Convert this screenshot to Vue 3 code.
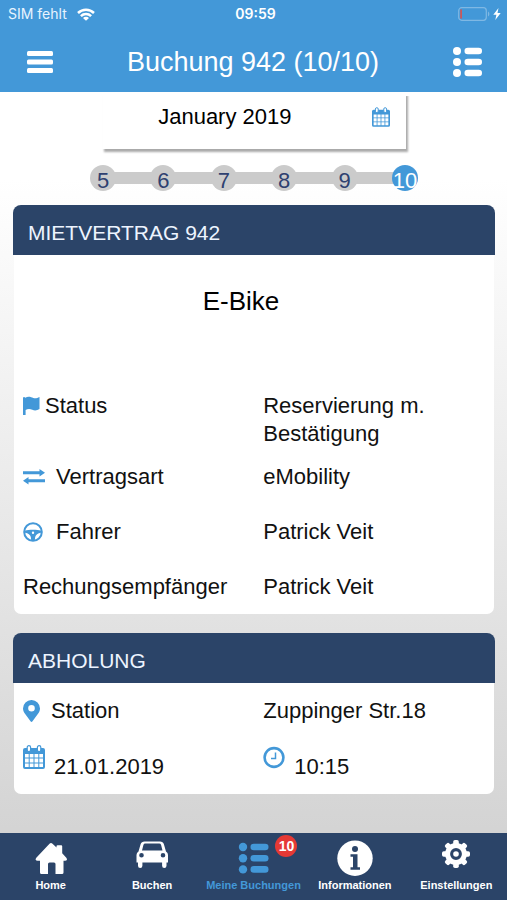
<script setup>
const days = [5, 6, 7, 8, 9, 10]
const activeDay = 10

const tabs = [
  { id: 'home', label: 'Home' },
  { id: 'car', label: 'Buchen' },
  { id: 'list', label: 'Meine Buchungen', badge: 10, active: true },
  { id: 'info', label: 'Informationen' },
  { id: 'gear', label: 'Einstellungen' },
]

const teeth = [0, 45, 90, 135, 180, 225, 270, 315]
</script>

<template>
  <div class="screen">
    <header class="top">
      <div class="status">
        <div class="carrier">
          <span>SIM fehlt</span>
          <svg class="wifi" viewBox="0 0 18 13" aria-hidden="true">
            <g fill="none" stroke="currentColor" stroke-width="2.500">
              <path d="M1 5C5.500 .7 12.500 .7 17 5" />
              <path d="M3.900 8.100C6.700 5.300 11.300 5.300 14.100 8.100" />
            </g>
            <path d="M9 12.800 6 9.900C7.700 8.400 10.300 8.400 12 9.900Z" fill="currentColor" />
          </svg>
        </div>
        <time class="clock">09:59</time>
        <div class="power">
          <svg class="battery" viewBox="0 0 32 14" aria-hidden="true">
            <rect x=".7" y=".7" width="27.600" height="12.600" rx="3" fill="none" stroke="#7fb8e4" stroke-width="1.200" />
            <path d="M30 4.500c1.800.8 1.800 4.200 0 5z" fill="#7fb8e4" />
            <rect x="2.200" y="2.300" width="1.800" height="9.400" rx=".8" fill="#c9585c" />
          </svg>
          <svg class="bolt" viewBox="0 0 8 12" aria-hidden="true">
            <path d="M5.500 0 .3 6.800h3.100L2.300 12 7.700 4.900H4.500z" fill="#fff" />
          </svg>
        </div>
      </div>
      <div class="navbar">
        <button class="icon-btn" type="button" aria-label="Menü">
          <svg class="burger" viewBox="0 0 26 22" aria-hidden="true">
            <rect width="26" height="5" rx="1.500" y="0" fill="#fff" />
            <rect width="26" height="5" rx="1.500" y="8.500" fill="#fff" />
            <rect width="26" height="5" rx="1.500" y="17" fill="#fff" />
          </svg>
        </button>
        <h1>Buchung 942 (10/10)</h1>
        <button class="icon-btn" type="button" aria-label="Liste">
          <svg class="list" viewBox="0 0 29 30" aria-hidden="true">
            <g fill="#fff">
              <circle cx="4" cy="4" r="4" /><circle cx="4" cy="15" r="4" /><circle cx="4" cy="26" r="4" />
              <rect x="11.500" y=".7" width="17.500" height="6.600" rx="3.300" />
              <rect x="11.500" y="11.700" width="17.500" height="6.600" rx="3.300" />
              <rect x="11.500" y="22.700" width="17.500" height="6.600" rx="3.300" />
            </g>
          </svg>
        </button>
      </div>
    </header>

    <main class="content">
      <button class="month" type="button">
        <span>January 2019</span>
        <svg class="month-icon" viewBox="0 0 22 24" aria-hidden="true">
          <path fill="currentColor" fill-rule="evenodd" d="M0 5q0-2 2-2h18q2 0 2 2v17q0 2-2 2H2q-2 0-2-2zM2 9v3.500h3.700V9zm4.700 0v3.500h3.800V9zm4.800 0v3.500h3.800V9zm4.800 0v3.500H20V9zM2 13.500v4h3.700v-4zm4.700 0v4h3.800v-4zm4.800 0v4h3.800v-4zm4.800 0v4H20v-4zM2 18.500V22h3.700v-3.500zm4.700 0V22h3.800v-3.500zm4.800 0V22h3.800v-3.500zm4.800 0V22H20v-3.500z" />
          <g fill="#fff" stroke="currentColor" stroke-width="1.200">
            <rect x="4.200" y=".6" width="3.400" height="6" rx="1.700" />
            <rect x="14.400" y=".6" width="3.400" height="6" rx="1.700" />
          </g>
        </svg>
      </button>

      <ol class="days">
        <li v-for="day in days" :key="day">
          <button type="button" class="day" :class="{ active: day === activeDay }">{{ day }}</button>
        </li>
      </ol>

      <section class="card">
        <h2>MIETVERTRAG 942</h2>
        <div class="body">
          <p class="vehicle">E-Bike</p>
          <dl>
            <div class="row">
              <dt class="tight">
                <svg class="narrow" viewBox="0 0 17 20" aria-hidden="true">
                  <path fill="currentColor" d="M0 1.500Q1.200.6 2.300 1.700C5-.2 8 .8 10.300 1.900 12.400 2.800 14.200 2 16.500.9V13c-2.200 1.500-4.700 2-7.200.8C6.800 12.600 4.600 12.800 2.600 14V19H0z" />
                </svg>
                Status
              </dt>
              <dd>Reservierung m. Bestätigung</dd>
            </div>
            <div class="row">
              <dt>
                <svg class="wide" viewBox="0 0 22 20" aria-hidden="true">
                  <path fill="currentColor" d="M0 4.300h16.500V2L22 5.800l-5.500 3.800V7.300H0zM22 12.300H5.500V10L0 13.800l5.500 3.800v-2.300H22z" />
                </svg>
                Vertragsart
              </dt>
              <dd>eMobility</dd>
            </div>
            <div class="row">
              <dt>
                <svg class="wide" viewBox="0 0 22 20" aria-hidden="true">
                  <circle cx="10" cy="10" r="8.800" fill="none" stroke="currentColor" stroke-width="2" />
                  <path fill="currentColor" fill-rule="evenodd" d="M2 8.800C5.500 7.400 14.500 7.400 18 8.800v1.900c-3.200.3-5.300 2.300-5.800 4.400L11.800 18H8.200l-.4-2.900C7.300 13 5.200 11 2 10.700zM10 9.600a1.200 1.200 0 1 0 0 2.400 1.200 1.200 0 0 0 0-2.400z" />
                </svg>
                Fahrer
              </dt>
              <dd>Patrick Veit</dd>
            </div>
            <div class="row">
              <dt>Rechungsempfänger</dt>
              <dd>Patrick Veit</dd>
            </div>
          </dl>
        </div>
      </section>

      <section class="card">
        <h2>ABHOLUNG</h2>
        <div class="body">
          <dl class="pickup">
            <div class="row">
              <dt>
                <svg class="narrow pin" viewBox="0 0 17 22" aria-hidden="true">
                  <path fill="currentColor" fill-rule="evenodd" d="M8.500 0A8.400 8.400 0 0 0 0 8.400c0 2.300 1 3.800 2 5.300L7.500 21.300q1 1.200 2 0L15 13.700c1-1.500 2-3 2-5.300A8.400 8.400 0 0 0 8.500 0zm0 5a3.300 3.300 0 1 1 0 6.600 3.300 3.300 0 0 1 0-6.600z" />
                </svg>
                Station
              </dt>
              <dd>Zuppinger Str.18</dd>
            </div>
            <div class="row stamp">
              <dt>
                <svg class="big" viewBox="0 0 22 24" aria-label="Datum">
                  <path fill="currentColor" fill-rule="evenodd" d="M0 5q0-2 2-2h18q2 0 2 2v17q0 2-2 2H2q-2 0-2-2zM2 9v3.500h3.700V9zm4.700 0v3.500h3.800V9zm4.800 0v3.500h3.800V9zm4.800 0v3.500H20V9zM2 13.500v4h3.700v-4zm4.700 0v4h3.800v-4zm4.800 0v4h3.800v-4zm4.800 0v4H20v-4zM2 18.500V22h3.700v-3.500zm4.700 0V22h3.800v-3.500zm4.800 0V22h3.800v-3.500zm4.800 0V22H20v-3.500z" />
                  <g fill="#fff" stroke="currentColor" stroke-width="1.200">
                    <rect x="4.200" y=".6" width="3.400" height="6" rx="1.700" />
                    <rect x="14.400" y=".6" width="3.400" height="6" rx="1.700" />
                  </g>
                </svg>
                <span>21.01.2019</span>
              </dt>
              <dd>
                <svg class="big" viewBox="0 0 22 24" aria-label="Uhrzeit">
                  <circle cx="11" cy="12.500" r="9.400" fill="none" stroke="currentColor" stroke-width="2.600" />
                  <path d="M12.500 7.500v6H8" fill="none" stroke="currentColor" stroke-width="1.500" />
                </svg>
                <span>10:15</span>
              </dd>
            </div>
          </dl>
        </div>
      </section>
    </main>

    <nav class="tabs">
      <a v-for="tab in tabs" :key="tab.id" href="#" class="tab" :class="{ current: tab.active }">
        <span class="glyph">
          <svg viewBox="0 0 36 36" fill="currentColor" aria-hidden="true">
            <path v-if="tab.id === 'home'" d="M16.500 3.800q1.500-1.400 3 0L23.500 7.500V6.200Q23.500 5.200 24.500 5.200h3.700q1 0 1 1v7L33.300 17.800c1.400 1.700.5 3-1.200 3H30.500V32.500q0 1.500-1.500 1.500h-6.500V24q0-1.500-1.500-1.500h-4.500Q15 22.500 15 24v10H8.500Q7 34 7 32.500V20.800H4.500c-1.700 0-2.600-1.300-1.200-3z" />
            <path v-else-if="tab.id === 'car'" fill-rule="evenodd" d="M10.500 1.500h15.500q3 0 3.900 2.800L32 11.500q2 1.200 2 3.500V22.500h-1.500v3.200a2.200 2.200 0 0 1-4.400 0V22.500H8.400v3.200a2.200 2.200 0 0 1-4.400 0V22.500H2.500v-7.500q0-2.300 2-3.500L6.600 4.300Q7.500 1.500 10.500 1.500zm.8 2Q9.800 3.500 9.400 4.900L8 10.500h20.500l-1.400-5.600Q26.700 3.500 25.200 3.500zM7.500 13a2.300 2.300 0 1 0 0 4.600 2.300 2.300 0 0 0 0-4.600zm21.500 0a2.300 2.300 0 1 0 0 4.600 2.300 2.300 0 0 0 0-4.600z" />
            <g v-else-if="tab.id === 'list'">
              <circle cx="8" cy="7" r="4.200" /><circle cx="8" cy="18.200" r="4.200" /><circle cx="8" cy="29.400" r="4.200" />
              <rect x="15.500" y="3.700" width="18" height="6.600" rx="3.300" />
              <rect x="15.500" y="14.900" width="18" height="6.600" rx="3.300" />
              <rect x="15.500" y="26.100" width="18" height="6.600" rx="3.300" />
            </g>
            <g v-else-if="tab.id === 'info'">
              <circle cx="18" cy="18.200" r="17.700" />
              <g fill="#2b4468">
                <circle cx="18" cy="9" r="3" />
                <path d="M13.500 14.300h7v13h2.500v2.500h-9.500v-2.500H16V16.800h-2.500z" />
              </g>
            </g>
            <g v-else>
              <rect v-for="a in teeth" :key="a" x="15.200" y="0" width="5.600" height="7" rx="1.800" :transform="`rotate(${a} 18 14)`" />
              <circle cx="18" cy="14" r="8.400" fill="none" stroke="currentColor" stroke-width="5" />
              <circle cx="18" cy="14" r="2.800" />
            </g>
          </svg>
          <span v-if="tab.badge" class="badge">{{ tab.badge }}</span>
        </span>
        <span>{{ tab.label }}</span>
      </a>
    </nav>
  </div>
</template>

<style>
body {
  margin: 0;
}
</style>

<style scoped>
.screen {
  display: flex;
  flex-direction: column;
  min-height: 100vh;
  font-family: "Liberation Sans", Arial, sans-serif;
  font-size: 22px;
  line-height: 28px;
  color: #111;
  background: linear-gradient(#fff 0, #fff 20%, #d4d4d4 92%);
}

button {
  border: 0;
  padding: 0;
  background: none;
  font: inherit;
  color: inherit;
}

svg {
  display: block;
  flex: none;
}

.top {
  background: #4398d8;
  color: #fff;
}

.status {
  display: grid;
  grid-template-columns: 1fr auto 1fr;
  align-items: center;
  height: 28px;
  padding: 0 6px 0 8px;
  font-family: Inter, "Liberation Sans", sans-serif;
  font-size: 14px;
  color: #e8f4ff;
}

.carrier,
.power {
  display: flex;
  align-items: center;
  gap: 10px;
}

.power {
  justify-content: flex-end;
  gap: 3px;
}

.clock {
  padding-left: 2px;
  font-weight: 600;
  color: #fff;
}

.wifi {
  width: 18px;
  height: 13px;
  color: #fff;
}

.battery {
  width: 32px;
  height: 14px;
}

.bolt {
  width: 8px;
  height: 12px;
}

.navbar {
  display: flex;
  align-items: center;
  justify-content: space-between;
  height: 64px;
  padding: 4px 25px 0 27px;
  box-sizing: border-box;
}

.navbar h1 {
  margin: 0;
  font-size: 27px;
  font-weight: 400;
}

.icon-btn {
  display: flex;
  align-items: center;
}

.burger {
  width: 26px;
  height: 22px;
}

.list {
  width: 29px;
  height: 30px;
}

.content {
  flex: 1;
  padding: 0 12px 38px 13px;
}

.month {
  display: flex;
  align-items: center;
  justify-content: space-between;
  width: 63%;
  margin: 0 auto;
  padding: 12px 16px 19px 56px;
  line-height: 26px;
  color: #000;
  background: #fff;
  box-shadow: 2px 3px 2px #aaa;
  clip-path: inset(4px -8px -8px 0);
}

.month-icon {
  width: 18px;
  height: 20px;
  color: #4398d8;
}

.days {
  display: flex;
  justify-content: space-between;
  margin: 16px 77px 14px;
  padding: 0;
  list-style: none;
  background: linear-gradient(#cbcbcb, #cbcbcb) center / calc(100% - 26px) 12px no-repeat;
}

.day {
  display: block;
  width: 26px;
  height: 26px;
  padding-top: 5px;
  border-radius: 50%;
  line-height: 22px;
  white-space: nowrap;
  color: #2f4170;
  background: #cbcbcb;
}

.day.active {
  color: #fff;
  background: #4398d8;
}

.card + .card {
  margin-top: 19px;
}

.card h2 {
  margin: 0;
  padding: 14px 15px 8px;
  border-radius: 8px 8px 0 0;
  font-size: 21px;
  font-weight: 400;
  color: #edf4ff;
  background: #2b4468;
}

.body {
  margin: 0 1px;
  padding: 0 9px;
  border-radius: 0 0 7px 7px;
  background: #fff;
}

.vehicle {
  margin: 0;
  padding: 31px 26px 76px 0;
  font-size: 26px;
  line-height: 30px;
  text-align: center;
  color: #000;
}

dl {
  margin: 0;
}

.row {
  display: grid;
  grid-template-columns: 52% 1fr;
  align-items: start;
  box-sizing: border-box;
  min-height: 55px;
  padding-bottom: 15px;
}

.row:last-child {
  min-height: 0;
  padding-bottom: 13px;
}

dt,
dd {
  display: flex;
  align-items: center;
  gap: 11px;
  margin: 0;
}

dt.tight {
  gap: 5px;
}

.row > dd {
  padding-right: 48px;
}

.row svg {
  color: #4398d8;
}

.narrow {
  width: 17px;
  height: 20px;
}

.pin {
  height: 22px;
}

.wide {
  width: 22px;
  height: 20px;
}

.big {
  width: 22px;
  height: 24px;
}

.pickup {
  padding-top: 14px;
}

.pickup .row:first-child {
  min-height: 48px;
}

.stamp dt,
.stamp dd {
  align-items: flex-start;
  gap: 9px;
}

.stamp span {
  padding-top: 8px;
}

.tabs {
  display: grid;
  grid-template-columns: repeat(5, 1fr);
  background: #2b4468;
}

.tab {
  display: flex;
  flex-direction: column;
  align-items: center;
  gap: 2px;
  padding: 7px 0 8px;
  font-size: 11px;
  font-weight: 700;
  line-height: 14px;
  white-space: nowrap;
  text-decoration: none;
  color: #fff;
}

.tab.current {
  color: #4398d8;
}

.glyph {
  position: relative;
}

.glyph svg {
  width: 36px;
  height: 36px;
}

.badge {
  position: absolute;
  top: -5px;
  left: 40px;
  width: 22px;
  height: 22px;
  border-radius: 50%;
  font-size: 14px;
  line-height: 22px;
  text-align: center;
  color: #fff;
  background: #e53935;
}
</style>
